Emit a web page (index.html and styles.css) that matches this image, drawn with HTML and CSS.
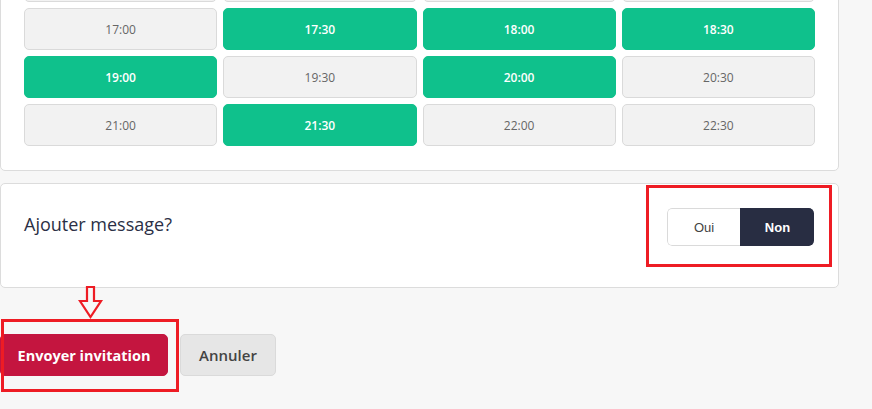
FILE: index.html
```html
<!DOCTYPE html>
<html lang="fr">
<head>
<meta charset="utf-8">
<title>Invitation</title>
<link rel="stylesheet" href="styles.css">
</head>
<body>
<div class="page">
  <section class="card slots-card">
    <div class="slots">
      <span class="slot"></span>
      <span class="slot"></span>
      <span class="slot"></span>
      <span class="slot"></span>
      <button class="slot">17:00</button>
      <button class="slot on">17:30</button>
      <button class="slot on">18:00</button>
      <button class="slot on">18:30</button>
      <button class="slot on">19:00</button>
      <button class="slot">19:30</button>
      <button class="slot on">20:00</button>
      <button class="slot">20:30</button>
      <button class="slot">21:00</button>
      <button class="slot on">21:30</button>
      <button class="slot">22:00</button>
      <button class="slot">22:30</button>
    </div>
  </section>

  <section class="card message-card">
    <h3 class="message-label">Ajouter message?</h3>
    <div class="toggle">
      <button class="toggle-opt">Oui</button>
      <button class="toggle-opt active">Non</button>
    </div>
    <span class="mark mark-toggle"></span>
  </section>

  <div class="actions">
    <button class="btn btn-primary">Envoyer invitation</button>
    <button class="btn btn-secondary">Annuler</button>
    <span class="mark mark-send"></span>
    <svg class="mark-arrow" width="26" height="34" viewBox="0 0 26 34">
      <path d="M9 1 H16 V15 H23 L12.5 31 L2 15 H9 Z" fill="none" stroke="#ee1c24" stroke-width="2.2" stroke-linejoin="miter"/>
    </svg>
  </div>
</div>
</body>
</html>
```

FILE: styles.css
```css
* { box-sizing: border-box; }

html {
  background: #f7f7f7;
}

body {
  margin: 0;
  padding: 0;
  background: #f7f7f7;
  font-family: "Open Sans", "Liberation Sans", sans-serif;
  overflow: hidden;
  height: 409px;
}

.page {
  width: 839px;
  margin-top: -165px;
  padding-bottom: 17px;
  position: relative;
}

.card {
  background: #fff;
  border: 1px solid #dcdcdc;
  border-radius: 5px;
}

.slots-card {
  padding: 124px 23px 24px 23px;
}

.slots {
  display: grid;
  grid-template-columns: repeat(4, 1fr);
  gap: 6px;
}

.slot {
  display: block;
  height: 42px;
  border: 1px solid #dadada;
  background: #f2f2f2;
  border-radius: 5px;
  font-family: "Open Sans", sans-serif;
  font-size: 12px;
  color: #666;
  padding: 0;
}

.slot.on {
  background: #0fc18c;
  border-color: #0fc18c;
  color: #fff;
  font-weight: 600;
}

.message-card {
  margin-top: 12px;
  position: relative;
  display: flex;
  justify-content: space-between;
  align-items: flex-start;
  padding: 24px 24px 41px 23px;
}

.message-label {
  margin: 0;
  font-size: 18px;
  font-weight: 400;
  color: #2b2f45;
  line-height: 32px;
}

.toggle {
  display: flex;
  height: 38px;
  border-radius: 5px;
  overflow: hidden;
}

.toggle-opt {
  width: 73px;
  border: 1px solid #dadada;
  background: #fff;
  font-family: "Liberation Sans", Arial, sans-serif;
  font-size: 13px;
  color: #444;
  padding: 0;
  border-radius: 5px 0 0 5px;
  border-right: none;
}

.toggle-opt.active {
  width: 74px;
  background: #282d42;
  border-color: #282d42;
  color: #fff;
  font-weight: 700;
  border-radius: 0 5px 5px 0;
}

.mark {
  position: absolute;
  border: 3px solid #ee1c24;
  pointer-events: none;
}

.mark-toggle {
  left: 645px;
  top: 1px;
  width: 186px;
  height: 82px;
}

.actions {
  position: relative;
  display: flex;
  gap: 12px;
  margin-top: 46px;
}

.btn {
  height: 42px;
  border-radius: 5px;
  font-family: "Open Sans", sans-serif;
  font-size: 15px;
  padding: 0;
  white-space: nowrap;
}

.btn-primary {
  width: 168px;
  background: #c4153f;
  border: 1px solid #c4153f;
  color: #fff;
  font-weight: 700;
  font-size: 14.5px;
}

.btn-secondary {
  width: 96px;
  background: #e6e6e6;
  border: 1px solid #dadada;
  color: #444;
  font-weight: 600;
}

.mark-send {
  left: 1px;
  top: -15px;
  width: 178px;
  height: 73px;
}

.mark-arrow {
  position: absolute;
  left: 78px;
  top: -48px;
}
```
